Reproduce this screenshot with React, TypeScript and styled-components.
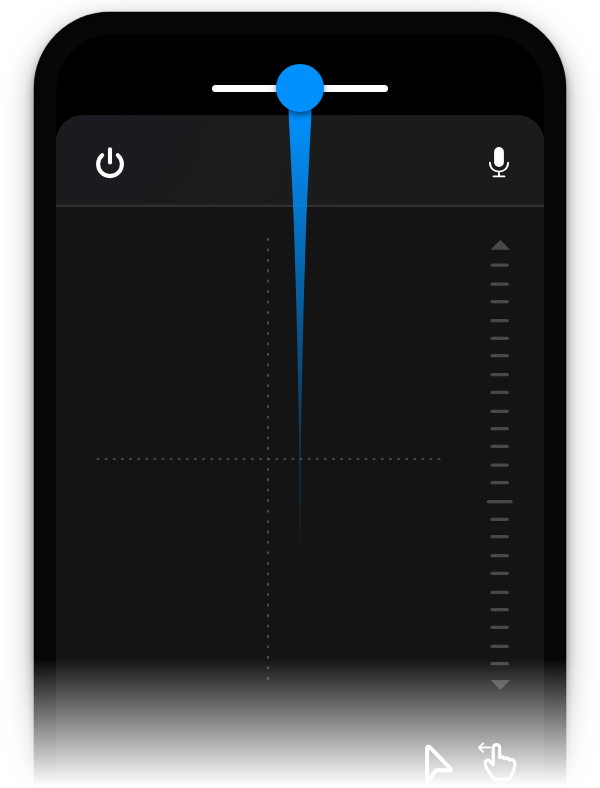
import React from "react";
import styled, { createGlobalStyle } from "styled-components";

const GlobalStyle = createGlobalStyle`
  *, *::before, *::after { box-sizing: border-box; }
  body { margin: 0; background: #fff; overflow: hidden; font-family: "Liberation Sans", sans-serif; }
`;

const Stage = styled.main`
  position: relative;
  width: 600px;
  height: 788px;
  padding: 12px 34px 0;
  overflow: hidden;
  background: #fff;
`;

const Phone = styled.section`
  height: 900px;
  padding: 22px 22px 0;
  border-radius: 76px;
  background: #070707;
  box-shadow: 0 0 0 0.5px rgba(0, 0, 0, 0.5), 0 6px 9px rgba(0, 0, 0, 0.36),
    0 10px 30px rgba(0, 0, 0, 0.34), inset 0 0 10px rgba(0, 0, 0, 0.6);
`;

const Screen = styled.div`
  display: flex;
  flex-direction: column;
  height: 860px;
  border-radius: 56px 56px 0 0;
  background: #000;
  box-shadow: 0 -0.3px 0.5px #141414;
  overflow: hidden;
`;

const SliderArea = styled.div`
  display: flex;
  justify-content: center;
  height: 81px;
  padding-top: 51px;
`;

const Track = styled.div`
  width: 176px;
  height: 6.5px;
  border-radius: 4px;
  background: #fff;
`;

const Panel = styled.div`
  flex: 1;
  border-radius: 27px 27px 0 0;
  background: #141414;
  overflow: hidden;
`;

const Header = styled.header`
  display: flex;
  justify-content: space-between;
  height: 92px;
  padding: 30px 30px 0 38px;
  border-bottom: 2px solid #303030;
  background: radial-gradient(circle at 8% 0, #1a1b20, #1b1c1c 35%, #1b1b1b 60%);
  box-shadow: inset 0 -1px #252525;
`;

const Pad = styled.div`
  display: flex;
  justify-content: space-between;
  padding: 30px 28px 0 40px;
`;

const IconSvg = styled.svg<{ $w: number; $h: number }>`
  display: block;
  width: ${(p) => p.$w}px;
  height: ${(p) => p.$h}px;
  overflow: visible;
  fill: none;
  stroke: #fff;
  stroke-linecap: round;
  stroke-linejoin: round;
`;

const Crosshair = styled.svg`
  width: 346px;
  height: 446px;
  stroke: #585858;
  stroke-width: 1.6;
`;

const Scale = styled.svg`
  width: 32px;
  height: 460px;
  fill: #484848;
`;

const Beam = styled.svg`
  position: absolute;
  left: 284px;
  top: 88px;
  width: 32px;
  height: 480px;
`;

const Knob = styled.div`
  position: absolute;
  left: 276px;
  top: 64px;
  width: 48px;
  height: 48px;
  border-radius: 50%;
  background: #0091ff;
  box-shadow: 0 3px 6px rgba(0, 0, 0, 0.5);
`;

const Fade = styled.div`
  position: absolute;
  left: 0;
  right: 0;
  bottom: 0;
  height: 129px;
  background: linear-gradient(rgba(255, 255, 255, 0), #fff 127px);
`;

const Tools = styled.div`
  position: absolute;
  left: 422px;
  top: 740px;
  display: flex;
  gap: 22px;
`;

const tickCentres = [
  265, 284, 301.5, 320.6, 338.2, 355.6, 374.6, 392.2, 411.2, 428.6, 446.2, 465,
  482.6, 501.6, 519.2, 536.6, 555.6, 573.2, 592.2, 609.6, 627.2, 646.2, 663.6,
];

const PowerIcon = () => (
  <IconSvg $w={32} $h={36} viewBox="0 0 32 36" strokeWidth="4.1">
    <path d="M16 4.4v13" />
    <path d="M8.2 10.2A11.9 11.9 0 1 0 23.8 10.2" />
  </IconSvg>
);

const MicIcon = () => (
  <IconSvg $w={30} $h={36} viewBox="0 0 30 36" strokeWidth="1.9">
    <rect x="10.1" y="2.1" width="9.8" height="19.9" rx="4.9" fill="#fff" stroke="none" />
    <path d="M5.9 17.6c0 12 18.2 12 18.2 0M15 26.8v4.6M9.6 31.4h10.8" />
  </IconSvg>
);

const CursorIcon = () => (
  <IconSvg $w={32} $h={44} viewBox="0 0 32 44" strokeWidth="4">
    <path d="M5.1 8.2C5.1 6.6 6.8 6.2 7.8 7.3L28.3 28.4C29.3 29.4 28.8 30.7 27.4 30.6L15.6 29.9C14.6 29.9 14 30.2 13.4 30.9L8 39.6C7 41.4 5.1 41 5.1 39.3Z" />
  </IconSvg>
);

const SwipeIcon = () => (
  <IconSvg $w={44} $h={44} viewBox="0 0 44 44" strokeWidth="3.2">
    <path
      strokeWidth="2"
      d="M14.2 7.6H2.9M7.2 3.4L2.9 7.6L7.2 11.8"
    />
    <path d="M17.2 24.8V7.9c0-4.4 6.5-4.4 6.5 0v9.7c2-1.5 3.9-.8 4.4 1.1c2-1.2 4.5-.7 5.2 1.2c3.4-1.1 6.3 1.3 5.4 5.2c-.6 5.6-2.3 10-5.7 14.2H19.3C13.5 33.7 9.9 29 9.3 23.7c-.2-3.7 3.2-4.6 5-2.1Z" />
  </IconSvg>
);

export default function App() {
  return (
    <>
      <GlobalStyle />
      <Stage>
        <Phone>
          <Screen>
            <SliderArea>
              <Track />
            </SliderArea>
            <Panel>
              <Header>
                <PowerIcon />
                <MicIcon />
              </Header>
              <Pad>
                <Crosshair viewBox="96 237 346 446">
                  <path d="M268 238V681" strokeDasharray="2.8 7.65" />
                  <path d="M96.7 459H440.5" strokeDasharray="2.7 5.42" />
                </Crosshair>
                <Scale viewBox="484 237 32 460">
                  <path d="M490.5 249.7L500.3 239.7L510 249.7ZM490.5 680L500.3 690L510 680Z" />
                  {tickCentres.map((y, i) => {
                    const half = i === 13 ? 13 : 9.3;
                    return (
                      <rect
                        key={y}
                        x={499.7 - half}
                        y={y - 1.5}
                        width={half * 2}
                        height="3.2"
                        rx="1.6"
                      />
                    );
                  })}
                </Scale>
              </Pad>
            </Panel>
          </Screen>
        </Phone>
        <Beam viewBox="284 88 32 480">
          <defs>
            <linearGradient id="beam" gradientUnits="userSpaceOnUse" x1="0" y1="110" x2="0" y2="566">
              <stop offset="0" stopColor="#0091ff" />
              <stop offset="1" stopColor="#0091ff" stopOpacity="0" />
            </linearGradient>
          </defs>
          <path
            fill="url(#beam)"
            d="M288 88L288.7 115L291.4 170L293.7 220L295.9 290L297.4 350L299 430L299.4 566H300.6L301 430L302.6 350L304.1 290L306.3 220L308.6 170L311.3 115L312 88Z"
          />
        </Beam>
        <Knob />
        <Fade />
        <Tools>
          <CursorIcon />
          <SwipeIcon />
        </Tools>
      </Stage>
    </>
  );
}
